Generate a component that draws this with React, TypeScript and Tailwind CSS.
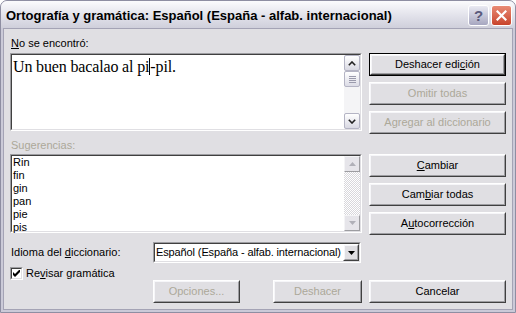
import React from "react";

type BtnProps = {
  children: React.ReactNode;
  def?: boolean;
  disabled?: boolean;
  className?: string;
};

function Btn({ children, def, disabled, className = "" }: BtnProps) {
  const body = (
    <div className="h-full w-full border border-t-white border-l-white border-r-[#404040] border-b-[#404040]">
      <div
        className={`flex h-full w-full items-center justify-center border border-t-[#f6f6f9] border-l-[#f6f6f9] border-r-[#9d9da1] border-b-[#9d9da1] bg-[#e0dfe3] text-[11px] leading-[13px] ${
          disabled ? "text-[#aca899]" : "text-black"
        }`}
      >
        {children}
      </div>
    </div>
  );
  if (def) {
    return <div className={`h-[23px] border border-black ${className}`}>{body}</div>;
  }
  return <div className={`h-[23px] ${className}`}>{body}</div>;
}

function Sunken({ className = "", children }: { className?: string; children?: React.ReactNode }) {
  return (
    <div className={`border border-t-[#9d9da1] border-l-[#9d9da1] border-r-white border-b-white ${className}`}>
      <div className="h-full w-full border border-t-[#404040] border-l-[#404040] border-r-[#e0dfe3] border-b-[#e0dfe3] bg-white">
        {children}
      </div>
    </div>
  );
}

function XpScrollBtn({ up }: { up?: boolean }) {
  return (
    <div className="flex h-[16px] w-[16px] items-center justify-center rounded-[2px] border border-[#b4b4c4] bg-linear-to-b from-white to-[#d9d9e3]">
      <svg width="8" height="5" viewBox="0 0 8 5">
        {up ? (
          <path d="M0.8 4.2 L4 1 L7.2 4.2" fill="none" stroke="#222" strokeWidth="1.6" />
        ) : (
          <path d="M0.8 0.8 L4 4 L7.2 0.8" fill="none" stroke="#222" strokeWidth="1.6" />
        )}
      </svg>
    </div>
  );
}

function XpThumb() {
  return (
    <div className="flex h-[16px] w-[16px] flex-col items-center justify-center gap-[1px] rounded-[2px] border border-[#b4b4c4] bg-linear-to-b from-white to-[#dcdce6]">
      <div className="h-px w-[7px] bg-[#9a9aac]" />
      <div className="h-px w-[7px] bg-[#9a9aac]" />
      <div className="h-px w-[7px] bg-[#9a9aac]" />
      <div className="h-px w-[7px] bg-[#9a9aac]" />
    </div>
  );
}

function DisScrollBtn({ up }: { up?: boolean }) {
  return (
    <div className="h-[16px] w-[16px] border border-t-[#f4f4f6] border-l-[#f4f4f6] border-r-[#9d9da1] border-b-[#9d9da1] bg-[#e6e5ea]">
      <div className="flex h-full w-full items-center justify-center">
        <svg width="7" height="4" viewBox="0 0 7 4">
          {up ? <path d="M0 4 L3.5 0 L7 4 Z" fill="#b0b0b8" /> : <path d="M0 0 L3.5 4 L7 0 Z" fill="#b0b0b8" />}
        </svg>
      </div>
    </div>
  );
}

export default function App() {
  const suggestions = ["Rin", "fin", "gin", "pan", "pie", "pis"];
  return (
    <div className="h-[313px] w-[516px] overflow-hidden bg-white font-['Liberation_Sans',Arial,sans-serif] text-black">
      <div className="flex h-full w-full flex-col rounded-t-[7px] border border-[#8e8ea2] bg-[#cbcad8]">
        {/* Title bar */}
        <div className="flex h-[27px] shrink-0 items-center rounded-t-[6px] bg-linear-to-b from-[#fbfbfd] via-[#e4e4ec] to-[#cfcfdb] pl-[5px] pr-[3px]">
          <div className="flex-1 pt-[2px] text-[13px] font-bold leading-[16px] text-black">
            Ortografía y gramática: Español (España - alfab. internacional)
          </div>
          <div className="flex gap-[2px] pt-[2px]">
            <div className="flex h-[21px] w-[21px] items-center justify-center rounded-[3px] border border-white bg-linear-to-b from-[#e9e9f2] to-[#a7a7c0] text-[15px] font-bold leading-none text-[#5a5a7c]">
              ?
            </div>
            <div className="flex h-[21px] w-[21px] items-center justify-center rounded-[3px] border border-white bg-linear-to-b from-[#e88a74] to-[#c8432c]">
              <svg width="11" height="11" viewBox="0 0 11 11">
                <path d="M1.5 1.5 L9.5 9.5 M9.5 1.5 L1.5 9.5" stroke="white" strokeWidth="2.2" strokeLinecap="square" />
              </svg>
            </div>
          </div>
        </div>

        {/* Body */}
        <div className="mx-[2px] mb-[2px] flex flex-1 flex-col border border-[#a4a3b5] bg-[#e0dfe3] px-[6px] pt-[8px] text-[11px] leading-[13px]">
          <div className="flex gap-[7px]">
            {/* Left column */}
            <div className="flex w-[352px] flex-col">
              <div className="h-[13px] pl-px">
                <u>N</u>o se encontró:
              </div>
              <Sunken className="mt-[3px] h-[78px]">
                <div className="flex h-full">
                  <div className="flex-1 pl-px font-['Liberation_Serif','Times_New_Roman',serif] text-[16px] leading-[18px] tracking-[-0.15px]">
                    Un buen bacalao al pi
                    <span className="relative inline-block h-[17px] w-px translate-y-[3px] bg-black align-baseline" />
                    -pil.
                  </div>
                  <div className="flex h-full w-[16px] flex-col bg-[#f4f4f6]">
                    <XpScrollBtn up />
                    <XpThumb />
                    <div className="flex-1" />
                    <XpScrollBtn />
                  </div>
                </div>
              </Sunken>
              <div className="mt-[8px] h-[13px] pl-px text-[#aca899]">Sugerencias:</div>
              <Sunken className="mt-[2px] h-[79px]">
                <div className="flex h-full">
                  <div className="flex-1 pl-px">
                    {suggestions.map((s) => (
                      <div key={s} className="h-[13px] leading-[13px]">
                        {s}
                      </div>
                    ))}
                  </div>
                  <div className="flex h-full w-[16px] flex-col">
                    <DisScrollBtn up />
                    <div className="flex-1 bg-[repeating-conic-gradient(#d8d7dc_0%_25%,#ffffff_0%_50%)] bg-[length:2px_2px]" />
                    <DisScrollBtn />
                  </div>
                </div>
              </Sunken>
            </div>

            {/* Right column */}
            <div className="flex w-[137px] flex-col pt-[16px]">
              <Btn def>
                <span>
                  Deshacer edi<u>c</u>ión
                </span>
              </Btn>
              <Btn disabled className="mt-[6px]">
                Omitir todas
              </Btn>
              <Btn disabled className="mt-[6px]">
                Agregar al diccionario
              </Btn>
              <Btn className="mt-[20px]">
                <span>
                  <u>C</u>ambiar
                </span>
              </Btn>
              <Btn className="mt-[6px]">
                <span>
                  Cam<u>b</u>iar todas
                </span>
              </Btn>
              <Btn className="mt-[6px]">
                <span>
                  A<u>u</u>tocorrección
                </span>
              </Btn>
            </div>
          </div>

          {/* Idioma row */}
          <div className="mt-[7px] flex h-[21px] items-center">
            <div className="w-[143px] pl-px">
              Idioma del <u>d</u>iccionario:
            </div>
            <Sunken className="h-[21px] w-[208px]">
              <div className="flex h-full items-center">
                <div className="min-w-0 flex-1 overflow-hidden whitespace-nowrap pl-px tracking-[-0.12px]">
                  Español (España - alfab. internacional)
                </div>
                <div className="h-[17px] w-[16px] shrink-0 border border-t-white border-l-white border-r-[#404040] border-b-[#404040]">
                  <div className="flex h-full w-full items-center justify-center border border-t-[#f6f6f9] border-l-[#f6f6f9] border-r-[#9d9da1] border-b-[#9d9da1] bg-[#e0dfe3]">
                    <svg width="7" height="4" viewBox="0 0 7 4">
                      <path d="M0 0 L7 0 L3.5 4 Z" fill="black" />
                    </svg>
                  </div>
                </div>
              </div>
            </Sunken>
          </div>

          {/* Checkbox row */}
          <div className="mt-[4px] flex h-[13px] items-center">
            <div className="h-[13px] w-[13px] border border-t-[#9d9da1] border-l-[#9d9da1] border-r-white border-b-white">
              <div className="flex h-full w-full items-center justify-center border border-t-[#404040] border-l-[#404040] border-r-[#e0dfe3] border-b-[#e0dfe3] bg-white">
                <svg width="7" height="7" viewBox="0 0 7 7">
                  <path d="M0 2 L0 5 L2 7 L7 2 L7 -1 L2 4 Z" fill="black" />
                </svg>
              </div>
            </div>
            <div className="ml-[3px]">
              Re<u>v</u>isar gramática
            </div>
          </div>

          {/* Bottom buttons */}
          <div className="flex">
            <Btn disabled className="ml-[143px] w-[87px]">
              Opciones...
            </Btn>
            <Btn disabled className="ml-[33px] w-[89px]">
              Deshacer
            </Btn>
            <Btn className="ml-[7px] w-[137px]">Cancelar</Btn>
          </div>
        </div>
      </div>
    </div>
  );
}
